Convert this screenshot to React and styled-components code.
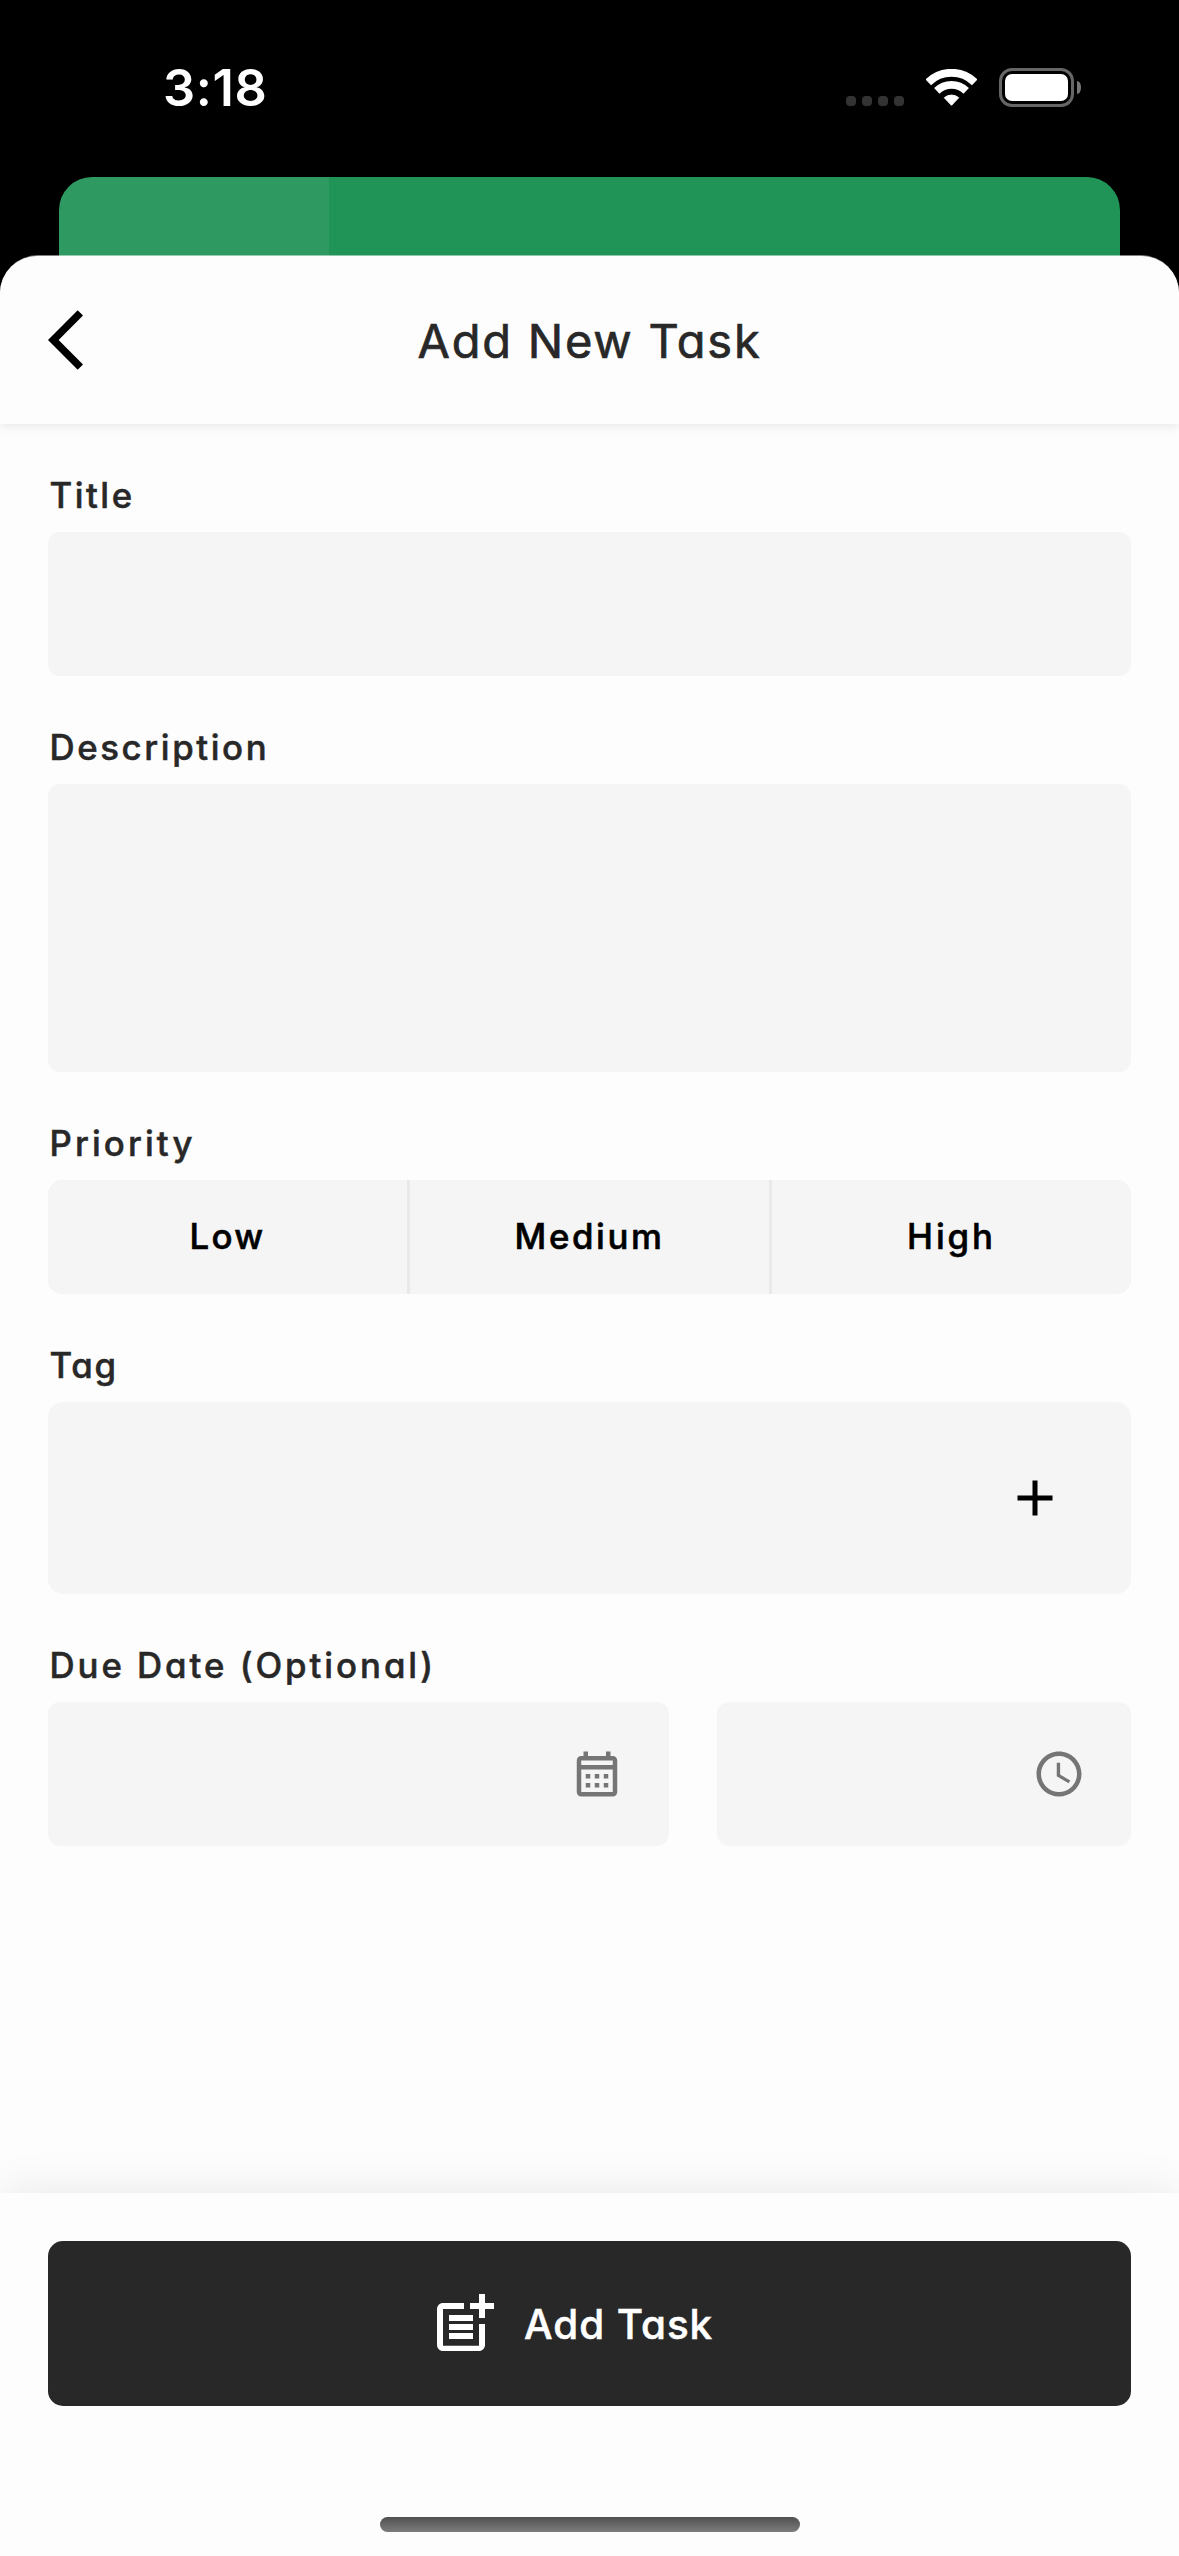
import React from "react";
import styled, { createGlobalStyle } from "styled-components";

const GlobalStyle = createGlobalStyle`
  *, *::before, *::after { box-sizing: border-box; }
  html, body { margin: 0; padding: 0; background: #000; }
  body {
    font-family: Inter, "Liberation Sans", sans-serif;
    -webkit-font-smoothing: antialiased;
  }
  svg { display: block; flex: none; }
`;

const Screen = styled.div`
  width: 1179px;
  height: 2556px;
  display: flex;
  flex-direction: column;
  overflow: hidden;
  background: #000;
`;

const StatusBar = styled.div`
  flex: none;
  height: 177px;
  padding: 68px 98px 0 163px;
  display: flex;
  align-items: flex-start;
  justify-content: space-between;
`;

const Clock = styled.div`
  font-size: 50.5px;
  line-height: 40px;
  font-weight: 600;
  letter-spacing: 0.6px;
  color: #fff;
`;

const StatusIcons = styled.div`
  display: flex;
  align-items: center;
  height: 39px;
`;

const SignalDots = styled.div`
  display: flex;
  gap: 6px;
  align-self: flex-end;
  margin: 0 22px 1px 0;
`;

const SignalDot = styled.span`
  width: 10px;
  height: 10px;
  border-radius: 4px;
  background: #333;
`;

const Battery = styled.div`
  width: 75px;
  height: 39px;
  margin: 0 3px 0 22px;
  padding: 3px;
  border: 3px solid #666;
  border-radius: 13px;
`;

const BatteryLevel = styled.div`
  height: 100%;
  border-radius: 7px;
  background: #fff;
`;

const BatteryCap = styled.span`
  width: 4px;
  height: 13px;
  border-radius: 0 4px 4px 0 / 0 6px 6px 0;
  background: #777;
`;

const BackCard = styled.div`
  flex: none;
  height: 120px;
  margin: 0 59px -42px;
  border-radius: 33px 33px 0 0;
  background: linear-gradient(to right, #2e9960 270px, #209457 270px);
`;

const Sheet = styled.main`
  flex: 1;
  min-height: 0;
  display: flex;
  flex-direction: column;
  border-top: 1px solid rgba(253, 253, 253, 0.5);
  border-radius: 38px 38px 0 0;
  background: #fdfdfd padding-box;
  overflow: hidden;
  position: relative;
`;

const Header = styled.header`
  flex: none;
  height: 168px;
  padding: 0 48px;
  display: grid;
  grid-template-columns: 72px 1fr 72px;
  align-items: center;
  background: #fdfdfd;
  box-shadow: 0 3px 9px rgba(0, 0, 0, 0.08);
`;

const IconButton = styled.button`
  display: flex;
  padding: 0;
  border: 0;
  background: none;
  color: ${(p) => p.$color || "#000"};
`;

const Heading = styled.h1`
  margin: 0;
  padding-top: 2px;
  text-align: center;
  font-size: 47px;
  line-height: 60px;
  font-weight: 400;
  -webkit-text-stroke: 0.7px currentColor;
  letter-spacing: ${(p) => p.$tracking}px;
  font-feature-settings: "cv11";
  color: #282828;
`;

const Form = styled.form`
  flex: 1;
  padding: 0 48px;
`;

const Field = styled.div`
  display: flex;
  flex-direction: column;
`;

const Label = styled.label`
  height: 108px;
  padding: 49px 0 0 1.5px;
  font-size: 34.8px;
  line-height: 44px;
  font-weight: 500;
  -webkit-text-stroke: 0.5px currentColor;
  letter-spacing: ${(p) => p.$tracking}px;
  font-feature-settings: "cv11";
  white-space: nowrap;
  color: #282828;
`;

const InputBox = styled.div`
  height: ${(p) => p.$height}px;
  padding-right: ${(p) => p.$inset || 0}px;
  display: flex;
  align-items: center;
  justify-content: flex-end;
  border-radius: ${(p) => p.$radius || 12}px;
  background: #f5f5f5;
`;

const Segments = styled.div`
  height: 114px;
  display: grid;
  grid-template-columns: repeat(3, 1fr);
  gap: 3px;
  border-radius: 15px;
  overflow: hidden;
  background: #e9e9e9;
`;

const Segment = styled.button`
  padding: 0 0 2px;
  border: 0;
  background: #f5f5f5;
  font-family: inherit;
  font-size: 34.8px;
  line-height: 44px;
  font-weight: 500;
  -webkit-text-stroke: 0.6px currentColor;
  letter-spacing: ${(p) => p.$tracking}px;
  font-feature-settings: "cv11";
  color: #000;
`;

const DueRow = styled.div`
  display: grid;
  grid-template-columns: 3fr 2fr;
  gap: 48px;
`;

const Footer = styled.footer`
  flex: none;
  height: 363px;
  padding: 48px 48px 24px;
  display: flex;
  flex-direction: column;
  align-items: center;
  justify-content: space-between;
  background: #fdfdfd;
  box-shadow: 0 0 44px rgba(0, 0, 0, 0.09);
`;

const SubmitButton = styled.button`
  width: 100%;
  height: 165px;
  padding: 0 0 0 380px;
  border: 0;
  border-radius: 15px;
  display: flex;
  align-items: center;
  gap: 24px;
  background: #282828;
  color: #fff;
`;

const SubmitText = styled.span`
  padding-top: 2px;
  font-family: Inter, "Liberation Sans", sans-serif;
  font-size: 40.4px;
  line-height: 52px;
  font-weight: 500;
  -webkit-text-stroke: 0.5px currentColor;
  letter-spacing: ${(p) => p.$tracking}px;
  font-feature-settings: "cv11";
`;

const HomeIndicator = styled.div`
  width: 420px;
  height: 15px;
  border-radius: 8px;
  background: linear-gradient(#505050, #7c7c7c);
`;

const Icon = ({ size, d }) => (
  <svg width={size} height={size} viewBox="0 0 24 24" fill="currentColor">
    <path d={d} />
  </svg>
);

const PATHS = {
  back: "M11.67 3.87 9.9 2.1 0 12l9.9 9.9 1.77-1.77L3.54 12z",
  add: "M19 13h-6v6h-2v-6H5v-2h6V5h2v6h6z",
  calendar:
    "M19 4h-1V2h-2v2H8V2H6v2H5c-1.11 0-1.99.9-1.99 2L3 20c0 1.1.89 2 2 2h14c1.1 0 2-.9 2-2V6c0-1.1-.9-2-2-2zm0 16H5V10h14v10zm0-12H5V6h14v2zM9 14H7v-2h2v2zm4 0h-2v-2h2v2zm4 0h-2v-2h2v2zm-8 4H7v-2h2v2zm4 0h-2v-2h2v2zm4 0h-2v-2h2v2z",
  clock:
    "M11.99 2C6.47 2 2 6.48 2 12s4.47 10 9.99 10C17.52 22 22 17.52 22 12S17.52 2 11.99 2zM12 20c-4.42 0-8-3.58-8-8s3.58-8 8-8 8 3.58 8 8-3.58 8-8 8zm.5-13H11v6l5.25 3.15.75-1.23-4.5-2.67z",
  postAdd:
    "M17 19.22H5V7h7V5H5c-1.1 0-2 .9-2 2v12c0 1.1.9 2 2 2h12c1.1 0 2-.9 2-2v-7h-2v7.22zM19 2h-2v3h-3v2h3v2.99h2V7h3V5h-3V2zM7 9h8v2H7zM7 12h8v2H7zM7 15h8v2H7z",
};

const WifiIcon = () => (
  <svg width="51" height="37" viewBox="0 0 51 37" fill="none" stroke="#fff">
    <path d="M2.3 13.3A33.2 33.2 0 0 1 48.7 13.3" strokeWidth="8" />
    <path d="M10.8 21.9A21 21 0 0 1 40.2 21.9" strokeWidth="7.8" />
    <path
      d="M25.5 36.3L18.3 28.7A11.2 11.2 0 0 1 32.7 28.7Z"
      fill="#fff"
      strokeWidth="1"
      strokeLinejoin="round"
    />
  </svg>
);

export default function App() {
  return (
    <>
      <GlobalStyle />
      <Screen>
        <StatusBar>
          <Clock>3:18</Clock>
          <StatusIcons>
            <SignalDots>
              <SignalDot />
              <SignalDot />
              <SignalDot />
              <SignalDot />
            </SignalDots>
            <WifiIcon />
            <Battery>
              <BatteryLevel />
            </Battery>
            <BatteryCap />
          </StatusIcons>
        </StatusBar>
        <BackCard />
        <Sheet>
          <Header>
            <IconButton type="button" aria-label="Back">
              <Icon size={72} d={PATHS.back} />
            </IconButton>
            <Heading $tracking={1.75}>Add New Task</Heading>
          </Header>
          <Form>
            <Field>
              <Label $tracking={2.5}>Title</Label>
              <InputBox $height={144} />
            </Field>
            <Field>
              <Label $tracking={2.6}>Description</Label>
              <InputBox $height={288} />
            </Field>
            <Field>
              <Label $tracking={3.1}>Priority</Label>
              <Segments>
                <Segment type="button" $tracking={2.4}>Low</Segment>
                <Segment type="button" $tracking={2.6}>Medium</Segment>
                <Segment type="button" $tracking={2.9}>High</Segment>
              </Segments>
            </Field>
            <Field>
              <Label $tracking={1.8}>Tag</Label>
              <InputBox $height={192} $radius={15} $inset={66}>
                <IconButton type="button" aria-label="Add tag">
                  <Icon size={60} d={PATHS.add} />
                </IconButton>
              </InputBox>
            </Field>
            <Field>
              <Label $tracking={2.95}>Due Date (Optional)</Label>
              <DueRow>
                <InputBox $height={144} $inset={45}>
                  <IconButton type="button" aria-label="Pick date" $color="#757575">
                    <Icon size={54} d={PATHS.calendar} />
                  </IconButton>
                </InputBox>
                <InputBox $height={144} $inset={45}>
                  <IconButton type="button" aria-label="Pick time" $color="#757575">
                    <Icon size={54} d={PATHS.clock} />
                  </IconButton>
                </InputBox>
              </DueRow>
            </Field>
          </Form>
          <Footer>
            <SubmitButton type="button">
              <Icon size={72} d={PATHS.postAdd} />
              <SubmitText $tracking={0.95}>Add Task</SubmitText>
            </SubmitButton>
            <HomeIndicator />
          </Footer>
        </Sheet>
      </Screen>
    </>
  );
}
